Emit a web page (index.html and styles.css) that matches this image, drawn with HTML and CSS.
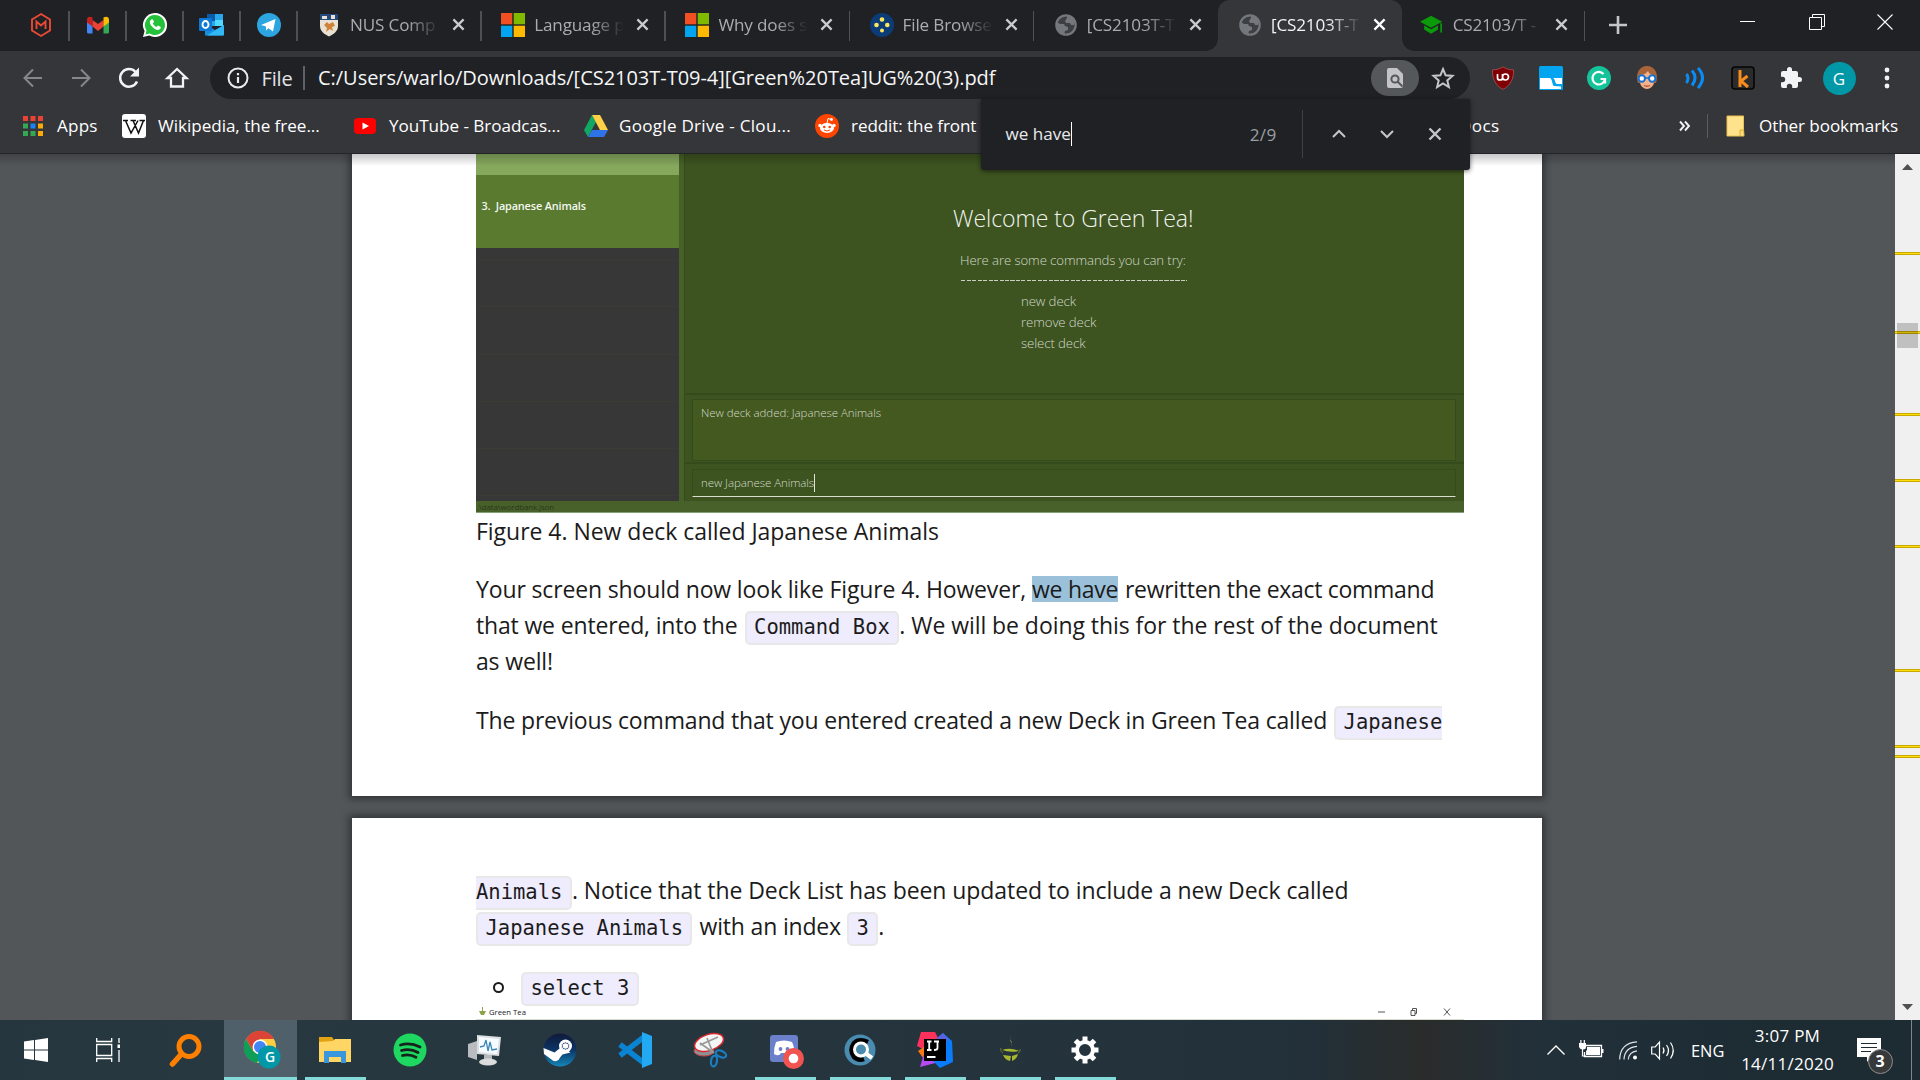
FILE: index.html
```html
<!DOCTYPE html>
<html lang="en">
<head>
<meta charset="utf-8">
<title>[CS2103T-T09-4][Green Tea]UG (3).pdf</title>
<link rel="stylesheet" href="styles.css">
</head>
<body>
<svg class="defs" width="0" height="0">
  <symbol id="x" viewBox="0 0 14 14"><path d="M1.5 1.5l11 11M12.5 1.5l-11 11" fill="none" stroke="currentColor" stroke-width="2.4"/></symbol>
  <symbol id="ms" viewBox="0 0 24 24"><path fill="#f25022" d="M0 0h11.3v11.3H0z"/><path fill="#7fba00" d="M12.7 0H24v11.3H12.7z"/><path fill="#00a4ef" d="M0 12.7h11.3V24H0z"/><path fill="#ffb900" d="M12.7 12.7H24V24H12.7z"/></symbol>
  <symbol id="globe" viewBox="0 0 22 22"><circle cx="11" cy="11" r="9.7" fill="#3c3f43" stroke="#74777b" stroke-width="2.2"/><path fill="#74777b" d="M2 8l3 2h4l1 2 3 1v3l-3 1-1 4-5-4-3-5zM12 1v3l-2 3 1 2h4l1 2h3l1-4-3-4z"/></symbol>
</svg>

<header class="tabstrip">
  <div class="tab pin"><svg width="24" height="26" viewBox="0 0 24 26"><path d="M12 2l9 5.5v11L12 24l-9-5.5v-11z" fill="none" stroke="#ea4a35" stroke-width="1.9"/><path d="M7.5 17V9.5l4.500 4 4.500-4V17" fill="none" stroke="#ea4a35" stroke-width="1.9"/></svg></div>
  <div class="tab pin"><svg width="24" height="20" viewBox="0 0 24 18"><path fill="#4285f4" d="M1 3.500V16a1.500 1.500 0 0 0 1.500 1.500H6.500V7z"/><path fill="#34a853" d="M23 3.500V16a1.500 1.500 0 0 1-1.500 1.500H17.500V7z"/><path fill="#ea4335" d="M6.500 10.500V4l5.500 4 5.500-4v6.500L12 15z"/><path fill="#c5221f" d="M1 3.500C1 .8 3.800-.2 6.500 1.500v9L1 6.500z"/><path fill="#fbbc04" d="M23 3.500c0-2.700-2.800-3.700-5.500-2v9L23 6.500z"/></svg></div>
  <div class="tab pin"><svg width="26" height="26" viewBox="0 0 26 26"><path fill="#fff" d="M13 1a12 12 0 0 0-10.400 18L1 25l6.300-1.500A12 12 0 1 0 13 1z"/><path fill="#25c13b" d="M13 3a10 10 0 0 0-8.500 15.300L3.500 22.500l4.200-1A10 10 0 1 0 13 3z"/><path fill="#fff" d="M9.500 7.500c-3 1.500-1.500 5 1 7.500 3 3 6 4 8 1.500 1-1.500-.5-2-2.500-3l-1.500 1.500c-1.800-.7-3-2-3.700-3.500l1.200-1.500c-.7-2-1.200-3-2.500-2.500z"/></svg></div>
  <div class="tab pin"><svg width="26" height="24" viewBox="0 0 26 24"><path fill="#28a8ea" d="M8 1h16v12H8z"/><path fill="#0a5ca8" d="M8 1h8v7H8z"/><path fill="#50d9ff" d="M16 7h8v6h-8z"/><path fill="#1490df" d="M6 22.500V11l10 6 9-5v9.500a1 1 0 0 1-1 1z"/><path fill="#32b8f5" d="M8 22.500L25 12v9.500a1 1 0 0 1-1 1z"/><rect y="5" width="13" height="13" rx="1" fill="#0f78d4"/><ellipse cx="6.500" cy="11.500" rx="3" ry="3.500" fill="none" stroke="#fff" stroke-width="1.9"/></svg></div>
  <div class="tab pin"><svg width="24" height="24" viewBox="0 0 24 24"><circle cx="12" cy="12" r="12" fill="#2ca5e0"/><path fill="#fff" d="M4 12L18.500 6 16 18.500l-4.500-3.300-2.500 2.300v-4z"/></svg></div>
  <div class="tab"><svg class="fav" width="24" height="24" viewBox="0 0 24 24"><path fill="#e9e2d4" d="M3 1h18v12c0 5-4 8-9 10.500C7 21 3 18 3 13z"/><path fill="#24477c" d="M3 1h18v6H3z"/><path fill="#e9e2d4" d="M5 3h5v3H5zM14 2h4v4h-4z"/><path fill="#cf8339" d="M7 12l3-3 2 2 4-2 2 4-3 1 1 4-3-2-4 3 1-4z"/></svg><span class="title">NUS Comp</span><svg class="cls"><use href="#x"/></svg></div>
  <div class="tab"><svg class="fav" width="24" height="24"><use href="#ms"/></svg><span class="title">Language p</span><svg class="cls"><use href="#x"/></svg></div>
  <div class="tab"><svg class="fav" width="24" height="24"><use href="#ms"/></svg><span class="title">Why does s</span><svg class="cls"><use href="#x"/></svg></div>
  <div class="tab"><svg class="fav" width="24" height="24" viewBox="0 0 24 24"><circle cx="12" cy="12" r="12" fill="#0b3c78"/><g fill="#ffe65c"><circle cx="12" cy="6.500" r="2.300"/><circle cx="6.500" cy="12" r="2.300"/><circle cx="17.300" cy="12" r="2.300"/><circle cx="12" cy="17.500" r="2"/></g></svg><span class="title">File Browse</span><svg class="cls"><use href="#x"/></svg></div>
  <div class="tab last"><svg class="fav" width="22" height="22"><use href="#globe"/></svg><span class="title">[CS2103T-T</span><svg class="cls"><use href="#x"/></svg></div>
  <div class="tab active"><svg class="fav" width="22" height="22"><use href="#globe"/></svg><span class="title">[CS2103T-T</span><svg class="cls"><use href="#x"/></svg></div>
  <div class="tab end"><svg class="fav" width="26" height="22" viewBox="0 0 26 20"><path fill="#0a9a0a" d="M12 0l12 6.500L12 13 0 6.500zM4.500 10.500L12 14.500l7.500-4V15L12 19.500 4.500 15zM22 8h1.800v10H22z"/></svg><span class="title">CS2103/T -</span><svg class="cls"><use href="#x"/></svg></div>
  <svg class="plus" width="18" height="18" viewBox="0 0 18 18"><path d="M9 0v18M0 9h18" stroke="#c4c7c9" stroke-width="2.600"/></svg>
  <div class="wincontrols">
    <svg width="16" height="16" viewBox="0 0 16 16"><path d="M0 7.500h15" stroke="#fff"/></svg>
    <svg width="16" height="16" viewBox="0 0 16 16"><path d="M.5 3.500h12v12H.5zM3.500 3.500v-3h12v12h-3" fill="none" stroke="#fff"/></svg>
    <svg width="16" height="16" viewBox="0 0 16 16"><path d="M.5.5l15 15M15.500.5l-15 15" stroke="#fff" stroke-width="1.100"/></svg>
  </div>
</header>

<nav class="toolbar">
  <div class="navbtns">
    <svg width="24" height="24" viewBox="0 0 24 24"><path d="M21 12H4M12 3.500L3.500 12l8.500 8.500" fill="none" stroke="#85888b" stroke-width="2"/></svg>
    <svg width="24" height="24" viewBox="0 0 24 24"><path d="M3 12h17M12 3.500l8.500 8.500-8.500 8.500" fill="none" stroke="#85888b" stroke-width="2"/></svg>
    <svg width="24" height="24" viewBox="0 0 24 24"><path d="M20 15.500A8.800 8.800 0 1 1 18.500 6" fill="none" stroke="#f1f3f4" stroke-width="2.500"/><path d="M22 1.500v9h-9z" fill="#f1f3f4"/></svg>
    <svg width="24" height="24" viewBox="0 0 24 24"><path d="M2.500 12L12 3l9.500 9H18v8.500H6V12z" fill="none" stroke="#f1f3f4" stroke-width="2.300"/></svg>
  </div>
  <div class="omnibox">
    <svg width="22" height="22" viewBox="0 0 22 22"><circle cx="11" cy="11" r="9.500" fill="none" stroke="#e8eaed" stroke-width="2"/><path d="M11 10v6M11 6v2.200" stroke="#e8eaed" stroke-width="2.200"/></svg>
    <span class="scheme">File</span>
    <span class="url">C:/Users/warlo/Downloads/[CS2103T-T09-4][Green%20Tea]UG%20(3).pdf</span>
    <span class="findpill"><svg width="16" height="20" viewBox="0 0 16 20"><path fill="#c2c4c6" d="M0 2a2 2 0 0 1 2-2h8l6 6v12a2 2 0 0 1-2 2H2a2 2 0 0 1-2-2z"/><circle cx="8" cy="11" r="3.600" fill="none" stroke="#55585b" stroke-width="2"/><path d="M10.500 13.500l5 5" stroke="#55585b" stroke-width="2"/></svg></span>
    <svg class="star" width="24" height="24" viewBox="0 0 24 24"><path d="M12 3l2.600 6.300 6.900.6-5.200 4.500 1.600 6.700L12 17.500l-5.900 3.600 1.600-6.700L2.500 9.900l6.900-.6z" fill="none" stroke="#c4c7c9" stroke-width="2"/></svg>
  </div>
  <div class="exts">
    <svg width="24" height="24" viewBox="0 0 24 24"><path fill="#7f0005" stroke="#9a4a4c" d="M12 .8c3 2 6 3 10.500 3C23 13 19 20 12 23.300 5 20 1 13 1.500 3.800 6 3.800 9 2.800 12 .8z"/><path d="M6.500 8v4q0 2 2.500 2t2.500-2V8M11.500 11a3 3 0 1 1 3 3q-3 0-3-3" fill="none" stroke="#fff" stroke-width="1.700"/></svg>
    <svg width="24" height="24" viewBox="0 0 24 24"><rect width="24" height="24" rx="1.500" fill="#03a4ef"/><path fill="#fff" d="M1 12h10c2.500 1 2 7 4 8l7 .5V23H1zM14 12h9v6h-5c-2.500-1-1.500-5-4-6z"/></svg>
    <svg width="24" height="24" viewBox="0 0 24 24"><circle cx="12" cy="12" r="12" fill="#15c39a"/><path d="M16.500 8A6.300 6.300 0 1 0 18 13h-4.500M18 13v4.500" fill="none" stroke="#fff" stroke-width="2.200"/></svg>
    <svg width="24" height="24" viewBox="0 0 24 24"><path fill="#a9653a" d="M3 17C0 8 4 0 12 0s12 8 9 17z"/><path fill="#f2b187" d="M5 9c5 0 7-3 8-4 1 3 4 4 6 4v7c0 4-4 7-7 7s-7-3-7-7z"/><g fill="#fff" stroke="#1670d6" stroke-width="2"><circle cx="6.800" cy="12.500" r="3.200"/><circle cx="17.200" cy="12.500" r="3.200"/></g><path d="M10 12h4" stroke="#1670d6" stroke-width="1.500"/><path d="M9 19.500q3 1.500 6 0" stroke="#b34a3c" stroke-width="1.300" fill="none"/></svg>
    <svg width="24" height="24" viewBox="0 0 24 24"><path d="M3.500 8q3 4 0 9M9 4.500q6 7 0 15M15 2q9 9.500 0 20" fill="none" stroke="#0a8cf5" stroke-width="3"/></svg>
    <svg width="24" height="24" viewBox="0 0 24 24"><rect x="1" y="1" width="22" height="22" rx="3" fill="#2b2b2b" stroke="#050505" stroke-width="1.600"/><path d="M9 4v17M16.500 10L10 15l7 6" fill="none" stroke="#f68b1e" stroke-width="3"/></svg>
    <svg width="24" height="24" viewBox="0 0 24 24"><path fill="#f1f3f4" d="M20.500 11H19V7a2 2 0 0 0-2-2h-4V3.500a2.500 2.500 0 0 0-5 0V5H4a2 2 0 0 0-2 2v3.800h1.500a2.700 2.700 0 0 1 0 5.400H2V20a2 2 0 0 0 2 2h3.800v-1.500a2.700 2.700 0 0 1 5.400 0V22H17a2 2 0 0 0 2-2v-4h1.500a2.500 2.500 0 0 0 0-5z"/></svg>
    <span class="avatar">G</span>
    <svg width="24" height="24" viewBox="0 0 24 24"><g fill="#f1f3f4"><circle cx="12" cy="4" r="2.400"/><circle cx="12" cy="12" r="2.400"/><circle cx="12" cy="20" r="2.400"/></g></svg>
  </div>
</nav>

<nav class="bookmarks">
  <svg width="20" height="20" viewBox="0 0 20 20"><path fill="#ea4335" d="M0 0h5v5H0zM7.500 0h5v5h-5zM15 0h5v5h-5z"/><path fill="#34a853" d="M0 7.500h5v5H0zM0 15h5v5H0zM7.500 15h5v5h-5z"/><path fill="#1a83f0" d="M7.500 7.500h5v5h-5z"/><path fill="#fbab08" d="M15 7.500h5v5h-5zM15 15h5v5h-5z"/></svg>
  <span class="t1">Apps</span>
  <svg width="24" height="24" viewBox="0 0 24 24"><rect width="24" height="24" rx="3" fill="#fff"/><path d="M1 6.500h5M8.500 6.500h5.500M17.500 6.500H23M3.500 6.500L9 19l7-12.500M11 6.500L16.500 19l5-12.500" fill="none" stroke="#111" stroke-width="1.500"/></svg>
  <span class="t2">Wikipedia, the free...</span>
  <svg width="22" height="16" viewBox="0 0 22 16"><rect width="22" height="16" rx="4" fill="#f00"/><path fill="#fff" d="M8.500 4.500L15 8l-6.500 3.500z"/></svg>
  <span class="t3">YouTube - Broadcas...</span>
  <svg width="24" height="22" viewBox="0 0 24 22"><path fill="#11a861" d="M8 0l4 7-8 15-4-7z"/><path fill="#ffcf48" d="M8 0h8l8 15h-8z"/><path fill="#2f73e8" d="M8 15h16l-4 7H4z"/></svg>
  <span class="t4">Google Drive - Clou...</span>
  <svg width="24" height="24" viewBox="0 0 24 24"><circle cx="12" cy="12" r="12" fill="#ff4500"/><g fill="#fff"><ellipse cx="12" cy="14" rx="7" ry="5"/><circle cx="5" cy="11.500" r="1.700"/><circle cx="19" cy="11.500" r="1.700"/><circle cx="16.500" cy="5.500" r="1.400"/></g><path d="M12 9.500l1-5 3 1" fill="none" stroke="#fff"/><g fill="#ff4500"><circle cx="9.300" cy="13" r="1.300"/><circle cx="14.700" cy="13" r="1.300"/></g><path d="M9 16q3 2 6 0" fill="none" stroke="#ff4500"/></svg>
  <span class="t5">reddit: the front</span>
  <span class="t6">Docs</span>
  <svg class="more" width="12" height="12" viewBox="0 0 12 12"><path d="M1 1.500L5 6l-4 4.500M6 1.500L10 6l-4 4.500" fill="none" stroke="#f1f3f4" stroke-width="1.900"/></svg>
  <span class="sep"></span>
  <svg width="19" height="22" viewBox="0 0 19 22"><path fill="#ffe38c" stroke="#e8c14f" d="M1 1h16.500v13l.5 7H1z"/><path d="M14 21v-6h4" fill="#ffd968" stroke="#d8ae3a"/></svg>
  <span class="other">Other bookmarks</span>
</nav>

<section class="findbar">
  <span class="query">we have</span>
  <span class="count">2/9</span>
  <span class="divider"></span>
  <svg width="14" height="14" viewBox="0 0 14 14"><path d="M1 10l6-6 6 6" fill="none" stroke="#c4c7c9" stroke-width="2"/></svg>
  <svg width="14" height="14" viewBox="0 0 14 14"><path d="M1 4l6 6 6-6" fill="none" stroke="#c4c7c9" stroke-width="2"/></svg>
  <svg width="14" height="14" class="fx"><use href="#x"/></svg>
</section>

<main class="viewer">
  <div class="pages">
    <article class="page first">
      <div class="shot">
        <div class="decks">
          <div class="deck above"></div>
          <div class="deck selected">3. &nbsp;Japanese Animals</div>
          <div class="deck short"></div><div class="deck"></div><div class="deck"></div><div class="deck"></div><div class="deck"></div><div class="deck"></div>
        </div>
        <div class="work">
          <div class="welcome">
            <div class="w1">Welcome to Green Tea!</div>
            <div class="w2">Here are some commands you can try:</div>
            <div class="dashes"></div>
            <div class="cmds"><span>new deck</span><span>remove deck</span><span>select deck</span></div>
          </div>
          <div class="resultwrap"><div class="result">New deck added: Japanese Animals</div></div>
          <div class="inputwrap"><div class="input">new Japanese Animals<i></i></div></div>
        </div>
        <div class="status">.\data\wordbank.json</div>
      </div>
      <div class="line figcap"><span>Figure 4. New deck called Japanese Animals</span></div>
      <div class="para">
        <div class="line"><span class="la">Your screen should now look like Figure 4. However,</span><mark>we have</mark><span class="lb">rewritten the exact command</span></div>
        <div class="line"><span class="lc">that we entered, into the</span><code>Command Box</code><span class="ld">. We will be doing this for the rest of the document</span></div>
        <div class="line"><span class="lc">as well!</span></div>
      </div>
      <div class="para two">
        <div class="line"><span class="le">The previous command that you entered created a new Deck in Green Tea called</span><code class="openend">Japanese</code></div>
      </div>
    </article>
    <article class="page second">
      <div class="line"><code class="openstart">Animals</code><span class="lf">. Notice that the Deck List has been updated to include a new Deck called</span></div>
      <div class="line"><code>Japanese Animals</code><span class="lg">with an index</span><code>3</code><span>.</span></div>
      <div class="line item"><b></b><code>select 3</code></div>
      <div class="shot2"><svg width="9" height="10" viewBox="0 0 9 10"><path fill="#8da04a" d="M1 4h7L6 8H3zM4 0h1v4H4z"/></svg><span>Green Tea</span>
        <svg class="wc" width="74" height="8" viewBox="0 0 74 8"><path d="M1 4h7M34 2.500h4v5h-4zM35.500 2.500V.5h4v5H38M67 .5l6 7M73 .5l-6 7" fill="none" stroke="#555"/></svg></div>
    </article>
  </div>
  <div class="scroll">
    <svg width="25" height="866" viewBox="0 0 25 866"><path fill="#505050" d="M7 16l5.500-6 5.500 6zM7 850l5.500 6 5.500-6z"/><path fill="#c9a800" d="M0 98h25v3H0zM0 177h25v3H0zM0 259h25v3H0zM0 325h25v3H0zM0 391h25v3H0zM0 515h25v3H0zM0 591h25v3H0zM0 601h25v3H0z"/><path fill="#ffdf0a" d="M0 99h25v1H0zM0 178h25v1H0zM0 260h25v1H0zM0 326h25v1H0zM0 392h25v1H0zM0 516h25v1H0zM0 592h25v1H0zM0 602h25v1H0z"/><path fill="#000" fill-opacity=".2" d="M2 169h21v25H2z"/></svg>
  </div>
</main>

<footer class="taskbar">
  <div class="ti start"><svg width="24" height="24" viewBox="0 0 24 24"><path fill="#fff" d="M0 3.500l10-1.400v9.400H0zM11 2l13-2v11.500H11zM0 12.500h10v9.400L0 20.500zM11 12.500h13V24l-13-2z"/></svg></div>
  <div class="ti view"><svg width="24" height="24" viewBox="0 0 24 24"><path d="M.7 0v3.500h15V0M.7 6.500h15v11H.7zM.7 24v-3.500h15V24M23 0v5M23 12v12" fill="none" stroke="#fff" stroke-width="1.300"/><path fill="#fff" d="M21.500 6.500H24V10h-2.500z"/></svg></div>
  <div class="ti"><svg width="34" height="34" viewBox="0 0 34 34"><circle cx="20" cy="13.500" r="10" fill="none" stroke="#ff7f00" stroke-width="5"/><path d="M12.500 21L3.500 31" stroke="#ff7f00" stroke-width="5.500" stroke-linecap="round"/></svg></div>
  <div class="ti cur"><svg width="38" height="38" viewBox="0 0 38 38"><circle cx="17" cy="16" r="16" fill="#ffcd41"/><path fill="#db4437" d="M3 8a16 16 0 0 1 28 0H17l-7 12z"/><path fill="#0f9d58" d="M3 8l7 12 8 3-4 9A16 16 0 0 1 3 8z"/><circle cx="17" cy="16" r="7.500" fill="#fff"/><circle cx="17" cy="16" r="6" fill="#4285f4"/><circle cx="26" cy="26" r="11.500" fill="#0097a7"/></svg><em>G</em></div>
  <div class="ti run"><svg width="32" height="28" viewBox="0 0 32 28"><path fill="#e2a212" d="M0 1h13l2 3v4H0z"/><path fill="#ffd664" d="M0 6l14-1 2-2h16v23H0z"/><path fill="#3a96dd" d="M5 15h22v12h-5v-6H10v6H5z"/></svg></div>
  <div class="ti"><svg width="34" height="34" viewBox="0 0 34 34"><circle cx="17" cy="17" r="16.500" fill="#1ed760"/><path d="M7.500 12q10-3 19.500 2M8.500 17.500q9-2.500 16.500 2M9.500 22.500q7-2 13.500 1.700" fill="none" stroke="#16231c" stroke-width="2.800" stroke-linecap="round"/></svg></div>
  <div class="ti"><svg width="34" height="32" viewBox="0 0 34 32"><path fill="#b9bdc0" d="M0 10l9-3v19l-9-3z"/><path fill="#dcdfe1" d="M9 1l24 2-2 19-22-2z"/><path fill="#f6fbff" d="M11 3l20 2-2 15-18-2z"/><path d="M12 13l4-1 2-6 2 11 2-9 2 8 5-1" fill="none" stroke="#3a86b8" stroke-width="1.300"/><path fill="#b5b9bc" d="M16 21h8v6h-8z"/><ellipse cx="20" cy="28" rx="9" ry="3.500" fill="#d9dbdd"/></svg></div>
  <div class="ti"><svg width="34" height="34" viewBox="0 0 34 34"><defs><linearGradient id="st" x1="0" y1="0" x2="0" y2="1"><stop offset="0" stop-color="#10193a"/><stop offset=".5" stop-color="#0c3566"/><stop offset="1" stop-color="#1387b8"/></linearGradient></defs><circle cx="17" cy="17" r="16.500" fill="url(#st)"/><path fill="#fff" d="M.5 15l11 4.500 5-4 2-2 9 6-8 2-2.500 3a5 5 0 0 1-8.500 2L1 21z"/><circle cx="22.500" cy="13" r="6.500" fill="#fff"/><circle cx="22.500" cy="13" r="4" fill="#0f2c5a" stroke="#fff"/><circle cx="22.500" cy="13" r="2.800" fill="#fff"/></svg></div>
  <div class="ti"><svg width="36" height="36" viewBox="0 0 36 36"><path d="M3 12.500L27 31M3 23.500L27 5" stroke="#0a83d0" stroke-width="5.500"/><path fill="#23a9f2" d="M25 0l10 4v28l-10 4z"/></svg></div>
  <div class="ti"><svg width="34" height="34" viewBox="0 0 34 34"><ellipse cx="11" cy="18" rx="10" ry="5" fill="#8d9194" stroke="#c94444"/><ellipse cx="16" cy="9.500" rx="15" ry="8" transform="rotate(-18 16 9.500)" fill="#f5f5f5" stroke="#d8282c" stroke-width="1.500"/><path d="M7 12l18-8M14 5l6 15M7 10l14 10" stroke="#999" stroke-width="1.700"/><g fill="none" stroke="#1a7fc0" stroke-width="2.200"><ellipse cx="28" cy="21" rx="5.500" ry="3" transform="rotate(25 28 21)"/><ellipse cx="21" cy="28" rx="3" ry="5.500" transform="rotate(10 21 28)"/></g></svg></div>
  <div class="ti run"><svg width="36" height="36" viewBox="0 0 36 36"><rect x="3" y="3" width="28" height="27" rx="3" fill="#6b80cb"/><path fill="#fff" d="M9 10q8-3 16 0 3 6 2 12-5 3-6-1h-7q-2 4-7 1 0-7 2-12z"/><circle cx="13.500" cy="17" r="1.900" fill="#6b80cb"/><circle cx="20.500" cy="17" r="1.900" fill="#6b80cb"/><circle cx="26.500" cy="26.500" r="10.500" fill="#f05350"/><circle cx="26.500" cy="26.500" r="4.800" fill="#fff"/></svg></div>
  <div class="ti run"><svg width="32" height="32" viewBox="0 0 32 32"><circle cx="16" cy="16" r="15.500" fill="#4a8bb0"/><path d="M24 8q-9-4-14 1-5 7 0 14 4 4 10 2" fill="none" stroke="#000" stroke-width="4.500"/><circle cx="17" cy="15.500" r="6.500" fill="#4a8bb0" stroke="#fff" stroke-width="3"/><path d="M21 19l7 5" stroke="#fff" stroke-width="4"/></svg></div>
  <div class="ti run"><svg width="36" height="36" viewBox="0 0 36 36"><path fill="#fe315d" d="M4 0h14l4 8-14 10-8-4z"/><path fill="#f97a12" d="M1 19l6-4v12z"/><path fill="#b74af7" d="M7 22l15 8-19 5z"/><path fill="#087cfa" d="M20 6l6-5 9 8 1 21-13 6-7-7z"/><path fill="#5a62e0" d="M20 6l6-5 6 7-8 4z"/><path d="M7 7h22v22H7z"/><path d="M10 9.500h4.500M12.200 9.500V18M10 18h4.500M17 9.500h5M20.500 9.500V16q0 2-3.500 2" fill="none" stroke="#fff" stroke-width="1.800"/><path fill="#fff" d="M10 24h8.500v2H10z"/></svg></div>
  <div class="ti run"><svg width="22" height="28" viewBox="0 0 22 28"><path fill="#a7b52f" d="M12 1q-2 3 0 5t0 4q2-3 0-5t0-4zM3 14q9-3 17 1-9 2-17-1zM4 19l8 1-1 5q-5-1-7-6zM19 18l-6 2v5q5-2 6-7z"/><path d="M2 12q-2 3 2 5M21 13q1 3-2 4" stroke="#6c7530" fill="none"/></svg></div>
  <div class="ti run"><svg width="28" height="28" viewBox="0 0 28 28"><circle cx="14" cy="14" r="8" fill="none" stroke="#fff" stroke-width="4"/><g stroke="#fff" stroke-width="5"><path d="M14 5V.5" id="t"/><use href="#t" transform="rotate(45 14 14)"/><use href="#t" transform="rotate(90 14 14)"/><use href="#t" transform="rotate(135 14 14)"/><use href="#t" transform="rotate(180 14 14)"/><use href="#t" transform="rotate(225 14 14)"/><use href="#t" transform="rotate(270 14 14)"/><use href="#t" transform="rotate(315 14 14)"/></g></svg></div>
  <div class="tray">
    <svg width="18" height="10" viewBox="0 0 18 10"><path d="M.5 9.500L9 1l8.500 8.500" fill="none" stroke="#fff" stroke-width="1.400"/></svg>
    <svg class="bat" width="25" height="20" viewBox="0 0 25 20"><path d="M7 5.500h15.500v11H5.500V12" fill="none" stroke="#fff" stroke-width="1.300"/><path fill="#fff" d="M8 7h13v8H7v-4l1-1zM23 9h1.500v4H23zM0 3h7v4q0 2.500-3 2.500T0 7zM1.300 0h1.200v3H1.300zM4.700 0h1.200v3H4.700z"/><path d="M3.500 9v7H7" fill="none" stroke="#fff" stroke-width="1.200"/></svg>
    <svg class="wifi" width="19" height="19" viewBox="0 0 19 19"><path d="M.7 18.500Q1 2 18 .8M5 18.500Q5.500 6.500 18 5.300M9.300 18.500Q9.800 11 18 9.800" fill="none" stroke="#dfe3e5" stroke-width="1.200"/><circle cx="16" cy="16.500" r="2" fill="#fff"/></svg>
    <svg class="vol" width="24" height="19" viewBox="0 0 24 19"><path d="M.7 6h3.500L8.500 1v17l-4.300-5H.7zM12 6.500q2 3 0 6M15.500 4q4 5.500 0 11M19.500 1.500q5.500 8 0 16" fill="none" stroke="#fff" stroke-width="1.200"/></svg>
    <span class="eng">ENG</span>
    <div class="clock"><span>3:07 PM</span><span>14/11/2020</span></div>
    <div class="note"><svg width="24" height="25" viewBox="0 0 24 25"><path fill="#fff" d="M0 0h24v19H14l-4 5V19H0z"/><path d="M4 5.500h16M4 9.500h16M4 13.500h10" stroke="#1d2b33" stroke-width="1.200"/></svg><b>3</b></div>
    <div class="desk"></div>
  </div>
</footer>
</body>
</html>
```
FILE: styles.css
```css
* { box-sizing: border-box; }
body { margin: 0; width: 1920px; height: 1080px; overflow: hidden; position: relative; background: #35363a; font-family: "Open Sans", "Noto Sans", sans-serif; font-size: 18px; color: #fff; white-space: nowrap; }
svg { display: block; flex: none; overflow: visible; }
span, code, mark { flex: none; }
.defs { position: absolute; }

/* tab strip */
.tabstrip { height: 51px; background: #202124; display: flex; align-items: center; padding-left: 12.5px; }
.tab { position: relative; width: 184.2px; height: 51px; display: flex; align-items: center; flex: none; padding: 0 0 2px 19.5px; color: #a9acb0; }
.tab::after { content: ""; position: absolute; right: 0; top: 11px; width: 1.5px; height: 30px; background: #4e5054; }
.tab.pin { width: 57px; padding: 0 0 2px; justify-content: center; }
.tab.last::after, .tab.active::after { display: none; }
.tab.active { background: #35363a; border-radius: 12px 12px 0 0; color: #f1f3f4; width: 183.7px; }
.tab.active::before { content: ""; position: absolute; left: -12px; right: -12px; bottom: 0; height: 12px; background: radial-gradient(circle at 0 0, transparent 11.5px, #35363a 12px) left / 12px 12px no-repeat, radial-gradient(circle at 100% 0, transparent 11.5px, #35363a 12px) right / 12px 12px no-repeat; }
.tab.end { width: 183px; padding-left: 17.5px; }
.fav { width: 24px; }
.title { margin-left: 9px; width: 92px; font-size: 17.1px; letter-spacing: -.15px; line-height: 28px; -webkit-mask-image: linear-gradient(90deg, #000 62%, transparent 98%); mask-image: linear-gradient(90deg, #000 62%, transparent 98%); }
.cls { width: 13px; height: 13px; margin-left: 10px; color: #c9cccf; }
.active .cls { color: #fff; }
.plus { margin: -1px 0 0 24px; }
.wincontrols { display: flex; gap: 52.5px; margin: -8px 27px 0 auto; }

/* toolbar */
.toolbar { height: 54px; display: flex; align-items: center; }
.navbtns { display: flex; gap: 24px; padding-left: 21px; width: 210px; flex: none; }
.omnibox { width: 1260px; height: 42px; border-radius: 21px; background: #202124; display: flex; align-items: center; padding-left: 16.5px; flex: none; font-size: 20px; color: #f5f6f7; }
.scheme { margin-left: 13px; width: 41px; color: #e2e4e7; letter-spacing: -.15px; }
.url { padding-left: 13.5px; border-left: 2px solid #5f6368; line-height: 24px; letter-spacing: -.03px; }
.findpill { width: 48px; height: 36px; border-radius: 18px; background: #55585b; display: flex; align-items: center; justify-content: center; margin-left: auto; }
.star { margin: 0 15px 0 12px; }
.exts { display: flex; align-items: center; gap: 24px; padding-left: 21px; }
.avatar { width: 33px; height: 33px; margin: 0 -4.5px; border-radius: 50%; background: #0097a7; font-size: 17px; display: flex; align-items: center; justify-content: center; }

/* bookmarks */
.bookmarks { height: 49px; display: flex; align-items: center; padding: 0 0 6px 23px; border-bottom: 1px solid #242528; font-size: 17.1px; }
.bookmarks span { margin-top: -2px; }
.bookmarks .t1 { margin-left: 14px; width: 65px; letter-spacing: .2px; }
.bookmarks .t2 { margin-left: 12px; width: 196px; letter-spacing: -.04px; }
.bookmarks .t3 { margin-left: 13px; width: 195px; letter-spacing: -.04px; }
.bookmarks .t4 { margin-left: 11px; width: 196px; letter-spacing: .26px; }
.bookmarks .t5 { margin-left: 12px; width: 126px; letter-spacing: -.1px; }
.bookmarks .t6 { margin-left: 482px; letter-spacing: .4px; }
.more { margin-left: auto; }
.bookmarks .sep { width: 1.5px; height: 24px; background: #5a5c60; margin: 0 18px 0 16px; }
.bookmarks .other { margin: -2px 22px 0 14px; width: 139px; letter-spacing: -.09px; }

/* find in page, floats over the toolbar edge */
.findbar { position: absolute; z-index: 3; left: 981px; top: 99px; width: 489px; height: 71px; background: #202124; border-radius: 0 0 3px 3px; box-shadow: 0 1px 5px rgba(0,0,0,.6); display: flex; align-items: center; padding: 0 0 1px 24.5px; font-size: 17.1px; color: #e8eaed; }
.query { border-right: 1.5px solid #fff; line-height: 24px; }
.count { margin-left: auto; color: #9aa0a6; letter-spacing: .3px; }
.divider { width: 1.5px; height: 48px; background: #3f4145; margin: 0 28.5px 0 25px; }
.findbar svg { width: 14px; margin-right: 34px; color: #c4c7c9; }
.findbar svg.fx { margin-right: 28.5px; }

/* document */
.viewer { height: 866px; display: flex; background: #525659; overflow: hidden; position: relative; }
.viewer::before { content: ""; position: absolute; z-index: 1; left: 0; top: 0; width: 1895px; height: 12px; background: linear-gradient(rgba(0,0,0,.22), transparent); }
.pages { width: 1895px; padding-left: 352px; flex: none; }
.page { width: 1189.5px; background: #fff; color: #1b1b1b; padding-left: 124px; box-shadow: 0 0 7px 3px rgba(0,0,0,.38); font-size: 23px; }
.page.first { height: 642px; margin-bottom: 22px; }
.page.second { height: 204px; padding-top: 54px; }
.line { display: flex; align-items: baseline; height: 36px; line-height: 37px; }
.para { margin-top: 22px; }
.para.two { margin-top: 23px; }
mark { background: #9bc1da; color: inherit; line-height: 26px; height: 26px; width: 86px; margin-left: 7px; letter-spacing: -.27px; }
code { font-family: "DejaVu Sans Mono", monospace; font-size: 20.5px; line-height: 25.5px; padding: 2px 7.5px; background: #eeecfd; border: 2px solid #e8e8e8; border-radius: 5px; }
.openend { border-right: 0; border-radius: 5px 0 0 5px; padding-right: 0; }
.openstart { border-left: 0; border-radius: 0 5px 5px 0; padding-left: 0; }
.figcap { letter-spacing: -.03px; }
.la { width: 549px; letter-spacing: -.14px; }
.lb { margin-left: 7px; letter-spacing: -.3px; }
.lc { margin-right: 7px; letter-spacing: -.16px; }
.ld { letter-spacing: -.06px; }
.le { margin-right: 7px; letter-spacing: -.17px; }
.lf { letter-spacing: -.07px; }
.lg { margin: 0 6px 0 7px; letter-spacing: -.17px; }
.item { margin-top: 28px; }
.item b { width: 11px; height: 11px; border: 2px solid #1b1b1b; border-radius: 50%; margin: 0 17px 0 17px; position: relative; top: -2px; }

/* embedded application picture */
.shot { width: 988px; height: 359px; display: grid; grid-template: 347px 12px / 203px 785px; background: #3d5420; color: #d2d8ca; }
.decks { background: #373737; overflow: hidden; }
.deck { height: 47.3px; border-bottom: 1px solid #3b3b36; }
.deck.above { height: 21px; background: #86a85d; border: 0; }
.deck.selected { height: 73px; background: #597a2f; border: 0; display: flex; align-items: center; padding: 0 0 12px 5.5px; font-size: 10.9px; letter-spacing: -.15px; font-weight: 600; color: #f4f7ef; }
.deck.short { height: 12px; }
.work { border-left: 5px solid #466027; box-shadow: inset 1px 0 #354a1c; }
.welcome { height: 241px; padding-top: 44px; border-bottom: 2px solid #354b1b; margin-left: 1px; font-weight: 300; }
.w1 { font-size: 23px; line-height: 40px; padding-left: 268px; color: #f1f3ee; letter-spacing: -.06px; }
.w2 { font-size: 13.2px; line-height: 24px; margin-top: 10px; padding-left: 275px; letter-spacing: -.1px; }
.dashes { margin: 8px 0 0 276px; width: 226px; height: 1px; background: repeating-linear-gradient(90deg, #c9d0c0 0 4px, transparent 4px 5.5px); }
.cmds { margin: 10px 0 0 336px; font-size: 13.2px; line-height: 21px; letter-spacing: -.09px; display: flex; flex-direction: column; align-items: flex-start; }
.resultwrap { height: 69px; padding: 4px 8px 0 7px; border-bottom: 2px solid #354b1b; margin-left: 1px; }
.result { height: 62px; background: #44591f; border: 1px solid #354b1b; padding: 4px 8px; font-size: 11.5px; font-weight: 300; line-height: 18px; letter-spacing: -.06px; }
.inputwrap { padding: 5px 8px 0 7px; margin-left: 1px; }
.input { height: 28px; border: 1px solid #354b1b; border-bottom: 1.5px solid #d8ddd0; padding: 0 0 1px 8px; display: flex; align-items: center; font-size: 11.5px; font-weight: 300; letter-spacing: -.07px; }
.input i { width: 1px; height: 18px; background: #dfe3d8; }
.status { grid-column: 1 / 3; background: #48602a; border-bottom: 1px solid #86a077; font-size: 8px; line-height: 12px; letter-spacing: -.14px; color: #2b3a1c; padding-left: 1px; }
.shot2 { margin-top: -3px; height: 15px; width: 988px; display: flex; align-items: center; border-bottom: 1px solid #d5dccb; font-size: 7.7px; color: #222; padding-left: 2px; }
.shot2 span { margin-left: 2px; }
.wc { margin-left: auto; margin-right: 13px; }

.scroll { width: 25px; background: #f0f0f0; }

/* taskbar */
.taskbar { height: 60px; display: flex; background: linear-gradient(90deg, #26363f, #273840 12%, #25343c 50%, #22303a 68%, #2a2c2b 74%, #22303a 80%, #1d2b33 92%); }
.ti { width: 75px; height: 60px; display: flex; align-items: center; justify-content: center; position: relative; flex: none; }
.ti.start { width: 72px; }
.ti.view { width: 76px; padding-right: 4px; }
.ti.cur + .ti { margin-left: -1px; }
.ti.run::after { content: ""; position: absolute; bottom: 0; left: 8px; width: 61px; height: 3px; background: #84d9d9; }
.ti.cur::before { content: ""; position: absolute; inset: 0 1px; background: #50606a; border-bottom: 3px solid #84d9d9; }
.ti.cur svg { position: relative; margin-left: 2px; }
.ti em { position: absolute; left: 41px; top: 26px; width: 12px; text-align: center; font: 600 14px/22px "Open Sans", sans-serif; }
.tray { margin-left: auto; display: flex; align-items: center; width: 373.5px; flex: none; font-size: 17px; }
.bat { margin-left: 14.5px; }
.wifi { margin-left: 15px; }
.vol { margin-left: 13px; }
.eng { margin-left: 16px; font-size: 16.4px; width: 33px; }
.clock { width: 94px; margin-left: 16.5px; display: flex; flex-direction: column; align-items: center; line-height: 28px; letter-spacing: .25px; }
.note { position: relative; margin-left: 22px; }
.note b { position: absolute; left: 11px; top: 11px; width: 25px; height: 25px; border-radius: 50%; background: #37393b; border: 1.5px solid #8b8d8f; font-size: 16px; line-height: 22px; text-align: center; }
.desk { margin-left: 30px; width: 1.5px; height: 60px; background: #7d868b; }
```
